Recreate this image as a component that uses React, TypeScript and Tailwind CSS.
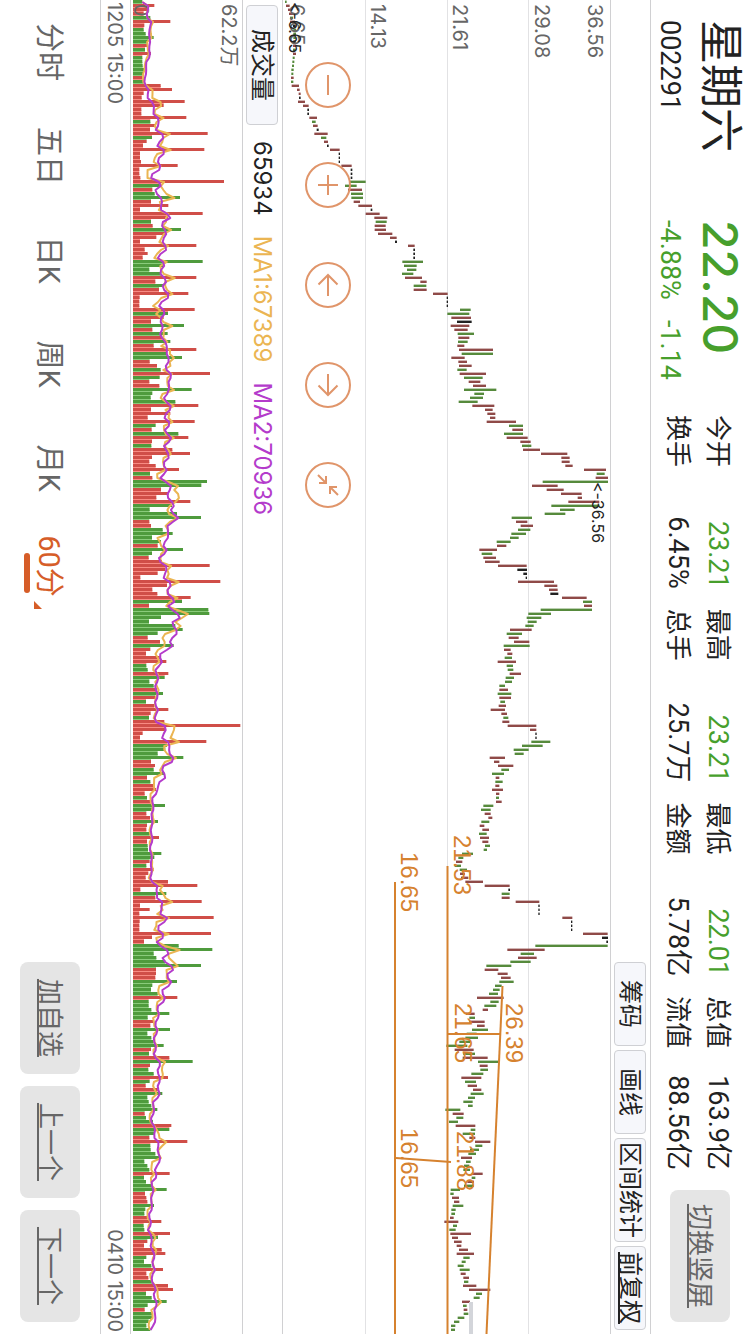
import type { ReactNode } from "react";

const UP = "#8f4a48";
const DOWN = "#568a3c";
const FLAT = "#222222";
const DRAW = "#d6822f";

const STATS = [
  { label: "今开", value: "23.21", down: true, label2: "换手", value2: "6.45%" },
  { label: "最高", value: "23.21", down: true, label2: "总手", value2: "25.7万" },
  { label: "最低", value: "22.01", down: true, label2: "金额", value2: "5.78亿" },
  { label: "总值", value: "163.9亿", down: false, label2: "流值", value2: "88.56亿" },
];

const PERIODS = ["分时", "五日", "日K", "周K", "月K"];

// direction + bar length, three units per pixel
const VOLUMES = `
g28 r64 r42 r32 g52 r112 r34 g32 g38 g62 g45 r42 g36 r54 g28 g28 g29 g34 g32 r28 g32 r83 r117 r32 r26 r155
r92 r25 r25 r160 g52 r67 r51 r224 g57 r41 r30 r214 r21 r21 r24 r134 r19 r19 r22 r273 g84 r58 g65 g141 r54
r106 r21 r209 r105 g54 r59 g144 r102 r70 r21 r190 r35 r44 r29 g209 g92 g49 g85 r190 r67 g92 r78 r166 r20
r19 r19 r185 g105 r92 r54 g153 r58 g104 r87 g112 r62 r190 g102 g147 r50 r72 g83 r231 g80 r49 r79 g176 g58
g53 g127 r196 r54 r112 r44 r185 g68 r56 g136 r166 r57 g55 r118 r171 r57 r49 r68 r138 g51 r58 g222 g205 r84
r107 r70 r172 g117 g50 g132 g204 r49 r54 g89 g119 g57 g84 r74 g150 g57 r47 r87 r230 r97 r74 r22 r262 r102
r58 r73 r173 g147 r48 g226 g229 g84 g48 g127 g149 g74 r44 r81 g122 r52 r39 r80 r100 g40 g44 r106 g95 g49
g62 r72 g90 r67 g39 r64 r106 r53 g48 r94 r322 r97 r29 r21 r220 g102 g97 g74 g151 r54 r66 g62 g94 r42 g52
r64 r69 r35 g42 r57 g96 g57 r40 r51 g75 r42 r40 g50 r78 r42 g44 g45 g85 g64 r50 g40 r62 r46 r38 r105 r193
r22 g100 r67 r206 r21 r50 r19 r242 r20 r19 r19 r234 r57 r33 g137 g238 g62 g70 g97 g204 r69 r69 r67 g132
g58 g54 g74 r133 g47 g47 g55 g109 g44 r60 r52 g111 g43 g55 g62 g92 r54 g48 r109 g179 r51 g46 g62 r105 g50
r38 r74 g88 g43 g47 g55 g73 r35 g39 g60 r115 g109 g64 r49 r163 g52 g53 g67 g82 g34 g43 g49 r110 g33 g39
g57 g101 r36 r40 r43 g63 g37 g34 r44 r85 g32 g34 r111 g75 r43 r33 r86 r97 g40 g33 g55 r90 r40 r46 g57 r105
r120 g39 g56 g101 g44 r35 g57 g57 g47 g40 g52`;

// direction + low-high, same units; k is an unchanged bar
const CANDLES = `
g0-5 r3-14 r9-20 r12-28 g15-24 r15-30 k24-32 g25-33 g25-33 g25-33 k24-32 r24-33 g24-32 r24-33 g23-29 g22-28
g21-27 g19-26 g19-25 r18-26 g18-25 r20-42 r36-44 r41-47 k42-47 r39-60 r54-71 k67-72 k67-72 r73-96 g81-92
r84-98 k95-101 r88-128 g108-124 r117-129 k126-131 r135-164 k161-165 k161-165 k161-165 r169-200 k197-202
k197-202 k197-202 g195-242 g180-215 r189-231 g198-234 g199-234 r206-225 r220-261 k257-262 r242-284 r268-307
g272-305 r269-302 r269-303 r279-322 r315-335 k330-336 r369-389 k385-390 k385-390 k385-390 g352-414 g357-395
g366-394 g351-385 r360-411 r406-425 g386-424 r386-425 r444-488 k485-489 k485-489 k485-489 g525-557 g487-553
r499-558 k516-560 r497-553 r508-548 g518-567 r520-553 g519-548 r517-538 r522-624 g530-624 r499-539 r520-546
r522-560 g517-545 r524-603 g537-593 r551-586 r564-603 g537-634 g568-597 g555-594 g521-578 r562-628 r600-623
r607-631 r615-631 r605-693 g672-714 r682-714 g657-714 r665-728 r706-737 g711-739 r714-765 r768-847 r829-854
r830-854 r841-863 r897-963 g935-959 r932-969 g773-969 r741-818 r785-836 r828-890 r878-891 r850-943 g799-943
g825-869 g779-841 g680-741 r693-727 r707-744 g699-736 g679-723 g675-701 g635-677 r636-664 r583-636 g590-622
r595-633 r600-644 r639-725 k697-726 k715-726 k722-726 r699-807 r778-817 r792-818 k796-820 r831-905 g894-921
r897-921 g767-921 g730-798 g725-769 g728-755 g721-746 r675-740 g665-711 r671-701 r687-733 g656-734 r657-677
r667-682 g659-681 r638-693 g665-684 g668-685 r674-708 g662-687 g660-681 g643-660 r643-669 g638-679 r643-678
g646-660 r641-663 r617-660 r649-666 g655-670 r652-673 r668-754 r735-754 k751-755 k751-755 g739-796 g711-773
g686-731 g689-716 r614-660 r627-643 r639-685 g649-672 g621-657 r632-643 g631-653 r631-643 r621-654 r633-643
g633-642 r633-650 g595-625 g588-617 r599-617 r610-622 g589-613 r584-598 r592-612 g582-605 r585-612 r592-610
g600-615 g596-606 g531-564 g520-535 r513-532 g509-528 g524-546 r525-540 r528-550 r541-594 r599-674 k670-675
g650-674 r650-674 r692-763 k760-764 k760-764 k760-764 r832-862 k858-862 k858-862 k858-862 r894-968 k951-969
k964-969 g751-968 r667-779 g707-747 r699-755 g676-737 g604-679 r599-640 r638-668 r648-677 g643-686 g630-650
g624-644 g612-639 r576-656 g616-641 g598-634 r593-609 r543-569 g553-570 r553-599 r576-599 g561-609 g545-575
g541-579 g523-555 g484-547 r509-566 g535-570 r533-608 g579-641 r584-608 g586-609 g559-595 r529-589 g540-573
r548-576 r564-589 g557-596 g549-570 g535-563 g549-563 g481-526 r503-536 g514-535 g492-519 r512-571 g557-571
g533-570 r553-571 r570-616 g571-592 g555-582 g550-573 r528-561 g543-557 g537-553 g535-555 r560-593 g560-571
r547-567 g537-567 g497-525 g496-506 r501-522 r507-523 g503-535 g499-512 g499-510 r495-506 r478-520 g504-516
g493-512 r496-558 r501-519 r507-530 r515-529 r522-549 r515-567 g535-554 g530-542 g518-536 g524-554 r527-542
r535-552 g537-550 r534-574 r552-616 g573-591 g566-584 r531-555 g534-545 r536-547 g536-550 g518-538 g507-523
g498-511 g498-510`;

const volumes = VOLUMES.trim()
  .split(/\s+/)
  .map((t) => ({ up: t[0] === "r", h: Number(t.slice(1)) / 3 }));

const candles = CANDLES.trim()
  .split(/\s+/)
  .map((t) => {
    const [lo, hi] = t.slice(1).split("-").map(Number);
    const color = t[0] === "r" ? UP : t[0] === "g" ? DOWN : FLAT;
    return { lo: lo / 3, hi: hi / 3, color };
  });

function movingAverage(n: number) {
  return volumes
    .map((_, i) => {
      const part = volumes.slice(Math.max(0, i - n + 1), i + 1);
      const avg = part.reduce((sum, v) => sum + v.h, 0) / part.length;
      return `${i * 4 + 2},${(109 - avg).toFixed(1)}`;
    })
    .join(" ");
}

function PriceChart() {
  return (
    <svg
      viewBox="0 0 1334 327"
      preserveAspectRatio="xMinYMin meet"
      className="block w-full overflow-visible"
      role="img"
      aria-label="60分"
    >
      {[82, 163, 245].map((y) => (
        <rect key={y} x="0" y={y - 1} width="1334" height="1" fill="#e2e2e4" />
      ))}
      {candles.map((c, i) => (
        <rect
          key={i}
          x={i * 4 + 0.6}
          y={325 - c.hi}
          width="2.4"
          height={c.hi - c.lo}
          fill={c.color}
        />
      ))}
      <rect x="1302" y="137" width="32" height="4" fill="#d3d5da" />

      <g className="font-['Inter',sans-serif] text-[20px]" fill="#666666">
        <text x="4" y="22">36.56</text>
        <text x="4" y="75">29.08</text>
        <text x="4" y="157">21.61</text>
        <text x="4" y="239">14.13</text>
        <text x="4" y="320">6.65</text>
      </g>
      <g className="font-['Inter',sans-serif] text-[16px]" fill="#222222">
        <text x="2" y="321">{"<-6.65"}</text>
        <text x="482" y="18">{"<-36.56"}</text>
      </g>

      {/* Trend lines */}
      <g stroke={DRAW} strokeWidth="2" fill="none">
        <path d="M882 215H1334" />
        <path d="M866 162.500H1334" />
        <path d="M986 107.500L1334 123.500" />
        <path d="M1034 162V110" />
        <path d="M1158 214L1162 159" />
      </g>
      <g className="font-['Liberation_Sans',sans-serif] text-[24px]" fill={DRAW}>
        <text x="852" y="209">16.65</text>
        <text x="1128" y="209">16.65</text>
        <text x="835" y="156">21.53</text>
        <text x="1003" y="104">26.39</text>
        <text x="1003" y="155">21.65</text>
        <text x="1131" y="153">21.88</text>
      </g>
    </svg>
  );
}

function VolumeChart() {
  return (
    <svg
      viewBox="0 0 1334 111"
      preserveAspectRatio="xMinYMin meet"
      className="block w-full overflow-visible"
      role="img"
      aria-label="成交量"
    >
      {volumes.map((v, i) => {
        const next = volumes[i + 1] ? volumes[i + 1].h : 0;
        const gap = Math.min(v.h, next);
        return (
          <g key={i}>
            <rect x={i * 4 + 2} y={109 - gap} width="2" height={gap} fill={v.up ? "#f88b83" : "#8acb7b"} />
            <rect x={i * 4} y={109 - v.h} width="3" height={v.h} fill={v.up ? "#d04e48" : "#4f9b3d"} />
          </g>
        );
      })}
      <g className="font-['Inter','Noto_Sans_CJK_SC',sans-serif] text-[20px]" fill="#666666">
        <text x="4" y="20">62.2万</text>
        <text x="4" y="108">0</text>
      </g>
      <polyline points={movingAverage(5)} fill="none" stroke="#ebb552" strokeWidth="2" strokeLinejoin="round" />
      <polyline points={movingAverage(10)} fill="none" stroke="#b43bcb" strokeWidth="2" strokeLinejoin="round" />
    </svg>
  );
}

function RoundButton({ label, children }: { label: string; children: ReactNode }) {
  return (
    <button
      type="button"
      aria-label={label}
      className="flex size-[46px] items-center justify-center rounded-full border-2 border-[#e0956a] text-[#e0956a]"
    >
      <svg viewBox="0 0 24 24" className="size-6" fill="none" stroke="currentColor" strokeWidth="2">
        {children}
      </svg>
    </button>
  );
}

function ToolButton({ children, className = "px-[17px]" }: { children: ReactNode; className?: string }) {
  return (
    <button
      type="button"
      className={`h-8 rounded-sm border border-[#cfd0d4] bg-[#f6f7fb] text-2xl leading-7 text-[#222] ${className}`}
    >
      {children}
    </button>
  );
}

function GrayLink({ children }: { children: ReactNode }) {
  return (
    <a
      href="#"
      className="flex h-[60px] items-center justify-center rounded-lg bg-[#e5e5e5] px-[14px] text-[26px] text-[#666] underline underline-offset-2"
    >
      {children}
    </a>
  );
}

export default function App() {
  return (
    <div className="relative h-screen w-full overflow-hidden bg-white">
      {/* Landscape page turned a quarter clockwise */}
      <main className="absolute top-0 left-full flex h-[100vw] w-[100vh] origin-top-left rotate-90 flex-col bg-white font-['Roboto','Noto_Sans_CJK_SC',sans-serif] whitespace-nowrap text-[#222]">
        <header className="flex h-[100px] shrink-0 border-b border-[#d0d0d2] pr-3 pl-5">
          <div className="w-[200px]">
            <h1 className="text-[44px] leading-[60px]">星期六</h1>
            <p className="text-[27px] leading-10">002291</p>
          </div>
          <div className="w-[195px] text-[#479f2c]">
            <p className="font-['Inter',sans-serif] text-[48px] leading-[60px] font-medium">22.20</p>
            <p className="flex gap-5 text-[27px] leading-10">
              <span>-4.88%</span>
              <span>-1.14</span>
            </p>
          </div>
          <div className="grid flex-1 grid-cols-4 gap-x-5 pt-3 text-[27px] leading-10">
            {STATS.map((s) => (
              <dl key={s.label} className="grid grid-cols-[auto_1fr] content-start">
                <dt className="text-[26px]">{s.label}</dt>
                <dd className={s.down ? "text-right text-[#479f2c]" : "text-right"}>{s.value}</dd>
                <dt className="text-[26px]">{s.label2}</dt>
                <dd className="text-right">{s.value2}</dd>
              </dl>
            ))}
          </div>
          <div className="ml-5 pt-5">
            <GrayLink>切换竖屏</GrayLink>
          </div>
        </header>

        <div className="flex h-10 shrink-0 items-center justify-end gap-1 border-b border-[#d0d0d2] pr-1">
          <ToolButton>筹码</ToolButton>
          <ToolButton>画线</ToolButton>
          <ToolButton className="px-[3px]">区间统计</ToolButton>
          <ToolButton className="px-[5px] underline underline-offset-2">前复权</ToolButton>
        </div>

        <section className="relative min-h-0 flex-1 border-b border-[#d0d0d2]">
          <PriceChart />
          <div className="absolute bottom-[22px] left-[62px] flex gap-[54px]">
            <RoundButton label="缩小">
              <path d="M2 12H22" />
            </RoundButton>
            <RoundButton label="放大">
              <path d="M2 12H22M12 2V22" />
            </RoundButton>
            <RoundButton label="左移">
              <path d="M2 12H23M11.500 2.500L2 12L11.500 21.500" />
            </RoundButton>
            <RoundButton label="右移">
              <path d="M1 12H22M12.500 2.500L22 12L12.500 21.500" />
            </RoundButton>
            <RoundButton label="还原">
              <path d="M22 2L14 10M14 3V10H21M2 22L10 14M3 14H10V21" />
            </RoundButton>
          </div>
        </section>

        <div className="flex h-10 shrink-0 items-center gap-4 border-b border-[#d0d0d2] pl-[5px] font-['Inter','Noto_Sans_CJK_SC',sans-serif] text-2xl">
          <ToolButton className="px-[23px]">成交量</ToolButton>
          <div className="flex gap-5">
            <span>65934</span>
            <span className="text-[#ebb552]">MA1:67389</span>
            <span className="text-[#b43bcb]">MA2:70936</span>
          </div>
        </div>

        <section className="h-[112px] shrink-0 border-b border-[#d0d0d2]">
          <VolumeChart />
        </section>

        <div className="flex h-[30px] shrink-0 items-center justify-between border-b border-[#d0d0d2] px-[2px] font-['Inter',sans-serif] text-xl leading-7 text-[#666]">
          <span>1205 15:00</span>
          <span>0410 15:00</span>
        </div>

        <nav className="flex h-[100px] shrink-0 items-center pr-3 text-[29px] text-[#666]">
          {PERIODS.map((p) => (
            <button key={p} type="button" className="w-[104px] pt-1">
              {p}
            </button>
          ))}
          <button type="button" className="relative flex w-[104px] items-end justify-center gap-1 pt-1 text-[#d65d28]">
            60分
            <svg viewBox="0 0 8 8" className="mb-2 size-2" fill="currentColor">
              <path d="M8 0V8H0z" />
            </svg>
            <span className="absolute -bottom-[2px] left-[33px] h-[6px] w-10 rounded-full bg-[#d65d28]" />
          </button>
          <div className="ml-auto flex gap-3">
            <GrayLink>
              <span className="px-[3px]">加自选</span>
            </GrayLink>
            <GrayLink>
              <span className="px-[3px]">上一个</span>
            </GrayLink>
            <GrayLink>
              <span className="px-[3px]">下一个</span>
            </GrayLink>
          </div>
        </nav>
      </main>
    </div>
  );
}
